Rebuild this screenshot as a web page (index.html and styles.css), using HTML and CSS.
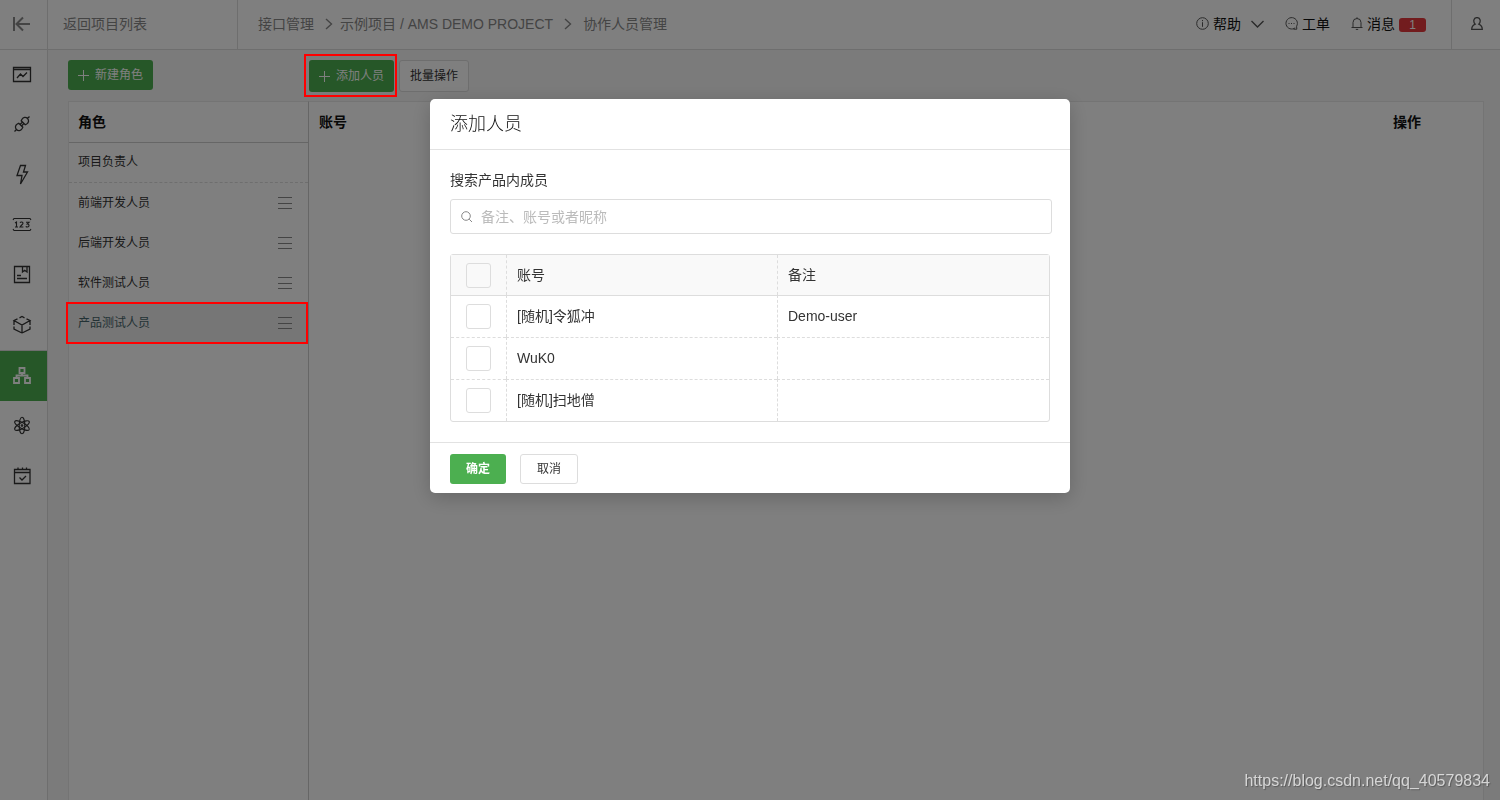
FILE: index.html
```html
<!DOCTYPE html>
<html lang="zh-CN">
<head>
<meta charset="utf-8">
<title>协作人员管理</title>
<link rel="stylesheet" href="styles.css">
</head>
<body>
<div class="app">
  <header class="topbar">
    <button class="collapse" type="button" aria-label="收起菜单">
      <svg class="icon" width="18" height="16" viewBox="0 0 18 16"><path d="M1 1v14M17 8H4M10 1.500L3.500 8l6.500 6.500"/></svg>
    </button>
    <a class="back" href="#">返回项目列表</a>
    <nav class="crumbs" aria-label="面包屑">
      <a href="#">接口管理</a>
      <svg class="icon" width="8" height="12" viewBox="0 0 8 12"><path d="M1 1l5.500 5L1 11"/></svg>
      <a href="#">示例项目 / AMS DEMO PROJECT</a>
      <svg class="icon" width="8" height="12" viewBox="0 0 8 12"><path d="M1 1l5.500 5L1 11"/></svg>
      <a href="#">协作人员管理</a>
    </nav>
    <div class="tools">
      <a class="tool" href="#">
        <svg class="icon" width="13" height="13" viewBox="0 0 13 13"><circle cx="6.500" cy="6.500" r="5.800"/><path d="M6.500 5.200v4.600M6.500 3v1.200"/></svg>
        <span>帮助</span>
        <svg class="icon tool-arrow" width="13" height="8" viewBox="0 0 13 8"><path d="M.5 1l6 6 6-6"/></svg>
      </a>
      <a class="tool" href="#">
        <svg class="icon" width="13" height="13" viewBox="0 0 13 13"><path d="M10.200 10.800A5.700 5.700 0 1 1 11.600 9.200L11.800 12.200H8.500"/><path d="M3.500 6.500h1M6 6.500h1M8.500 6.500h1"/></svg>
        <span>工单</span>
      </a>
      <a class="tool" href="#">
        <svg class="icon" width="12" height="13" viewBox="0 0 12 13"><path d="M.5 10.500h11M2 10.500V5.500a4 4 0 0 1 8 0v5M6 1.500V.3M4.800 12.400h2.400"/></svg>
        <span>消息</span>
        <span class="badge">1</span>
      </a>
    </div>
    <button class="user" type="button" aria-label="用户">
      <svg class="icon" width="12" height="13" viewBox="0 0 12 13"><path d="M4.200 7.200C1.800 4.500 2.600.6 6 .6s4.200 3.900 1.800 6.600c2 .8 3.400 2 3.500 5.200H.7C.8 9.200 2.200 8 4.200 7.200z"/></svg>
    </button>
  </header>

  <div class="body">
    <nav class="sidebar" aria-label="主菜单">
      <a href="#" aria-label="概况"><svg class="icon" width="20" height="20" viewBox="0 0 20 20"><path d="M1.500 3.500h17v14h-17zM1.500 5.500h17M5 14l3.500-4 2.500 2.500L15 8.500"/></svg></a>
      <a href="#" aria-label="接口"><svg class="icon" width="20" height="20" viewBox="0 0 20 20"><path d="M2.500 17.500l2-2M17.500 2.500l-2 2M4.500 15.500c-1.700-1.700-1.300-4.300.8-5.500l1.500-.8 4 4-.8 1.500c-1.200 2.100-3.800 2.500-5.500.8zM15.500 4.500c1.700 1.700 1.300 4.300-.8 5.500l-1.500.8-4-4 .8-1.500c1.200-2.100 3.800-2.500 5.500-.8zM8 10.500l2-2M9.500 12l2-2"/></svg></a>
      <a href="#" aria-label="自动化测试"><svg class="icon" width="20" height="22" viewBox="0 0 20 22"><path d="M8.500 2.500h5L11.500 9h4L8.500 21l1.500-8.500H5z"/></svg></a>
      <a href="#" aria-label="状态码"><svg class="icon icon-thin" width="20" height="20" viewBox="0 0 20 20"><path d="M1 6l1-1.500h16l1 1.500M1 15l1 1.500h16l1-1.500M3 9l1.500-1v5M3 13h3M8 8.700c.8-1.200 3-.8 3 .5 0 1.200-2 2-3 3.800h3.400M14 8.300h3l-1.800 1.700c2.400-.1 2.400 2.900.2 3-.8 0-1.300-.3-1.600-.7"/></svg></a>
      <a href="#" aria-label="项目文档"><svg class="icon" width="20" height="20" viewBox="0 0 20 20"><path d="M2.500 2.500h15v16h-15zM10.500 2.500v5.500l2.200-1.700L15 8V2.500M5 11.500h4M5 14.500h10"/></svg></a>
      <a href="#" aria-label="组件"><svg class="icon" width="20" height="20" viewBox="0 0 20 20"><path d="M7.500 3.800L10 2.500l2.500 1.300M14.500 4.800L18 6.500 10 11 2 6.500l3.500-1.700M2 6.500V11M2 12.500V15l8 4M18 6.500V11M18 12.500V15l-8 4M10 11v8"/></svg></a>
      <a class="current" href="#" aria-label="协作人员" aria-current="page"><svg class="icon icon-bold" width="20" height="20" viewBox="0 0 20 20"><path d="M7.500 3h5v5h-5zM2 13h5v5H2zM13 13h5v5h-5zM10 8v2.500M4.500 13v-2.500h11V13"/></svg></a>
      <a href="#" aria-label="环境"><svg class="icon icon-thin" width="20" height="20" viewBox="0 0 20 20"><ellipse cx="10" cy="10.500" rx="2.800" ry="8.300"/><ellipse cx="10" cy="10.500" rx="2.800" ry="8.300" transform="rotate(60 10 10.500)"/><ellipse cx="10" cy="10.500" rx="2.800" ry="8.300" transform="rotate(120 10 10.500)"/><circle cx="10" cy="10.500" r=".8"/></svg></a>
      <a href="#" aria-label="计划任务"><svg class="icon" width="20" height="20" viewBox="0 0 20 20"><path d="M2.500 4.500h15.500v14H2.500zM2.500 7.500H18M6 2.500v2M10.500 2.500v2M14.500 2.500v2M7.500 12.500l2.500 2.500 4-4"/></svg></a>
    </nav>

    <main class="main">
      <section class="roles">
        <div class="actions">
          <button class="btn btn-primary" type="button"><svg class="icon" width="11" height="11" viewBox="0 0 11 11"><path d="M5.500 0v11M0 5.500h11"/></svg>新建角色</button>
        </div>
        <div class="panel">
          <h2 class="panel-title">角色</h2>
          <ul class="role-list">
            <li class="role role-owner">项目负责人</li>
            <li class="role">前端开发人员<button class="more" type="button" aria-label="更多"></button></li>
            <li class="role">后端开发人员<button class="more" type="button" aria-label="更多"></button></li>
            <li class="role">软件测试人员<button class="more" type="button" aria-label="更多"></button></li>
            <li class="role role-active">产品测试人员<button class="more" type="button" aria-label="更多"></button><span class="mark"></span></li>
          </ul>
        </div>
      </section>
      <section class="members">
        <div class="actions">
          <div class="marked">
            <button class="btn btn-primary btn-tall" type="button"><svg class="icon" width="11" height="11" viewBox="0 0 11 11"><path d="M5.500 0v11M0 5.500h11"/></svg>添加人员</button>
            <span class="mark mark-wide"></span>
          </div>
          <button class="btn btn-plain btn-tall" type="button">批量操作</button>
        </div>
        <div class="panel">
          <div class="member-head"><span>账号</span><span class="col-action">操作</span></div>
        </div>
      </section>
    </main>
  </div>
</div>

<div class="overlay">
  <form class="modal" role="dialog" aria-labelledby="modal-title">
    <h1 class="modal-title" id="modal-title">添加人员</h1>
    <div class="modal-body">
      <label class="field-label" for="search">搜索产品内成员</label>
      <div class="search">
        <svg class="icon" width="12" height="12" viewBox="0 0 12 12"><circle cx="5" cy="5" r="4.300"/><path d="M8.200 8.200L11 11"/></svg>
        <input id="search" type="text" placeholder="备注、账号或者昵称">
      </div>
      <table class="people">
        <thead>
          <tr><th class="check"><input type="checkbox" aria-label="全选"></th><th class="account">账号</th><th>备注</th></tr>
        </thead>
        <tbody>
          <tr><td class="check"><input type="checkbox" aria-label="选择 [随机]令狐冲"></td><td>[随机]令狐冲</td><td>Demo-user</td></tr>
          <tr><td class="check"><input type="checkbox" aria-label="选择 WuK0"></td><td>WuK0</td><td></td></tr>
          <tr><td class="check"><input type="checkbox" aria-label="选择 [随机]扫地僧"></td><td>[随机]扫地僧</td><td></td></tr>
        </tbody>
      </table>
    </div>
    <div class="modal-foot">
      <button class="btn btn-primary btn-ok" type="button">确定</button>
      <button class="btn btn-plain btn-cancel" type="button">取消</button>
    </div>
  </form>
</div>
<div class="watermark">https://blog.csdn.net/qq_40579834</div>
</body>
</html>
```

FILE: styles.css
```css
* {
  box-sizing: border-box;
}

body {
  margin: 0;
  color: #333;
  font: 14px/20px "Liberation Sans", "Noto Sans CJK SC", sans-serif;
}

a {
  color: inherit;
  text-decoration: none;
}

button,
input {
  font: inherit;
  color: inherit;
}

button {
  padding: 0;
  border: 0;
  background: none;
}

.icon {
  flex: none;
  fill: none;
  stroke: currentColor;
  stroke-width: 1;
}

.app {
  display: flex;
  flex-direction: column;
  min-height: 100vh;
  background: #f6f6f6;
}

/* Top bar */
.topbar {
  display: flex;
  height: 50px;
  border-bottom: 1px solid #ddd;
  background: #fff;
  color: #888;
}

.collapse {
  display: flex;
  align-items: center;
  justify-content: center;
  width: 48px;
  padding-right: 4px;
  padding-bottom: 2px;
  border-right: 1px solid #ddd;
}

.collapse .icon {
  stroke-width: 2;
}

.back {
  width: 190px;
  padding: 14px 15px;
  border-right: 1px solid #ddd;
}

.crumbs {
  display: flex;
  flex: 1;
  align-items: center;
  padding: 0 0 2px 20px;
}

.crumbs .icon {
  margin: 0 7px 0 11px;
  stroke-width: 1.4;
}

.crumbs .icon:last-of-type {
  margin-right: 11px;
}

.tools {
  display: flex;
  align-items: center;
  gap: 21px;
  padding: 0 25px 2px 0;
  color: #111;
}

.tool {
  display: flex;
  align-items: center;
  gap: 4px;
}

.tool .icon {
  color: #555;
}

.tool .tool-arrow {
  margin-left: 6px;
  stroke-width: 1.4;
}

.badge {
  width: 27px;
  margin-top: 2px;
  border-radius: 3px;
  background: #e4393c;
  color: #fff;
  font-size: 12px;
  line-height: 14px;
  text-align: center;
}

.user {
  display: flex;
  align-items: center;
  justify-content: center;
  width: 49px;
  padding: 0 0 2px 2px;
  border-left: 1px solid #ddd;
  color: #555;
}

.user .icon {
  stroke-width: 1.3;
}

/* Side menu */
.body {
  display: flex;
  flex: 1;
}

.sidebar {
  display: flex;
  flex-direction: column;
  width: 48px;
  border-right: 1px solid #ddd;
  background: #fff;
  color: #333;
}

.sidebar a {
  display: flex;
  align-items: center;
  justify-content: center;
  height: 50px;
  padding: 0 3px 2px 0;
}

.sidebar .current {
  height: 51px;
  border-top: 1px solid #ddd;
  background: #4caf50;
  color: #fff;
}

.sidebar .icon {
  stroke-width: 1.3;
}

.sidebar .icon-thin {
  stroke-width: 1.1;
}

.sidebar .icon-bold {
  stroke-width: 1.8;
}

/* Work area */
.main {
  display: flex;
  flex: 1;
  padding: 10px 16px 0 20px;
}

.roles,
.members {
  display: flex;
  flex-direction: column;
}

.roles {
  width: 241px;
}

.members {
  flex: 1;
}

.actions {
  display: flex;
  align-items: flex-start;
  gap: 5px;
  height: 41px;
}

.btn {
  display: flex;
  align-items: center;
  justify-content: center;
  gap: 6px;
  height: 30px;
  padding: 0 10px;
  border-radius: 3px;
  font-size: 12px;
}

.btn-primary {
  background: #4caf50;
  color: #fff;
}

.btn-plain {
  border: 1px solid #ddd;
  background: #fff;
}

.btn-tall {
  height: 32px;
}

.marked {
  position: relative;
}

.mark {
  position: absolute;
  inset: -1px 0 -1px -3px;
  z-index: 20;
  border: 2px solid #f00;
}

.mark-wide {
  inset: -6px -3px -5px -5px;
}

.panel {
  flex: 1;
  border: 1px solid #e8e8e8;
  border-bottom: 0;
  background: #fff;
}

.roles .panel {
  border-right-color: #ccc;
}

.members .panel {
  border-left: 0;
}

.panel-title,
.member-head {
  height: 41px;
  margin: 0;
  padding: 10px;
  color: #111;
  font-size: 14px;
  font-weight: bold;
}

.panel-title {
  border-bottom: 1px solid #ccc;
  padding-left: 9px;
}

.member-head {
  display: flex;
  justify-content: space-between;
}

.col-action {
  width: 80px;
}

.role-list {
  margin: 0;
  padding: 0;
  list-style: none;
}

.role {
  position: relative;
  display: flex;
  align-items: center;
  justify-content: space-between;
  height: 40px;
  padding: 0 16px 0 9px;
  font-size: 12px;
}

.role-owner {
  padding-bottom: 2px;
  border-bottom: 1px dashed #ddd;
}

.role-active {
  background: #ececec;
  color: #47656b;
}

.more {
  width: 14px;
  height: 12px;
  border: solid #888;
  border-width: 1px 0;
  background: linear-gradient(#888, #888) center / 100% 1px no-repeat;
}

/* Dialog */
.overlay {
  position: fixed;
  inset: 0;
  z-index: 10;
  display: flex;
  align-items: flex-start;
  justify-content: center;
  padding-top: 99px;
  background: rgba(0, 0, 0, .5);
}

.modal {
  width: 640px;
  border-radius: 5px;
  background: #fff;
  box-shadow: 0 5px 20px rgba(0, 0, 0, .2);
}

.modal-title {
  margin: 0;
  padding: 15px 20px;
  border-bottom: 1px solid #e2e2e2;
  color: #111;
  font-size: 18px;
  font-weight: 300;
}

.modal-body {
  padding: 20px 18px 20px 20px;
}

.field-label {
  display: block;
  margin-bottom: 9px;
}

.search {
  display: flex;
  align-items: center;
  height: 35px;
  margin-bottom: 20px;
  padding-left: 10px;
  border: 1px solid #ddd;
  border-radius: 3px;
  color: #888;
}

.search input {
  flex: 1;
  padding: 0 8px;
  border: 0;
  outline: 0;
  background: none;
  color: #333;
}

.search input::placeholder {
  color: #bbb;
}

.people {
  width: calc(100% - 2px);
  border: 1px solid #ddd;
  border-radius: 3px;
  border-spacing: 0;
  table-layout: fixed;
}

.people th,
.people td {
  height: 42px;
  padding: 0 10px 2px;
  border-left: 1px dashed #ddd;
  border-top: 1px dashed #ddd;
  font-weight: normal;
  text-align: left;
}

.people th {
  height: 40px;
  padding-bottom: 0;
  border-top: 0;
  background: #f9f9f9;
}

.people tbody tr:first-child td {
  border-top-style: solid;
}

.people .check {
  width: 55px;
  padding: 0 15px;
  border-left: 0;
}

.people .account {
  width: 271px;
}

.people input {
  display: block;
  width: 25px;
  height: 25px;
  margin: 0;
  appearance: none;
  border: 1px solid #ddd;
  border-radius: 3px;
}

.modal-foot {
  display: flex;
  gap: 14px;
  padding: 11px 20px 9px;
  border-top: 1px solid #e2e2e2;
}

.btn-ok {
  width: 56px;
  font-weight: bold;
}

.btn-cancel {
  width: 58px;
}

.watermark {
  position: fixed;
  right: 10px;
  bottom: 9px;
  z-index: 30;
  color: rgba(255, 255, 255, .7);
  font-size: 16px;
  text-shadow: 1px 1px 1px rgba(0, 0, 0, .3);
}
```
